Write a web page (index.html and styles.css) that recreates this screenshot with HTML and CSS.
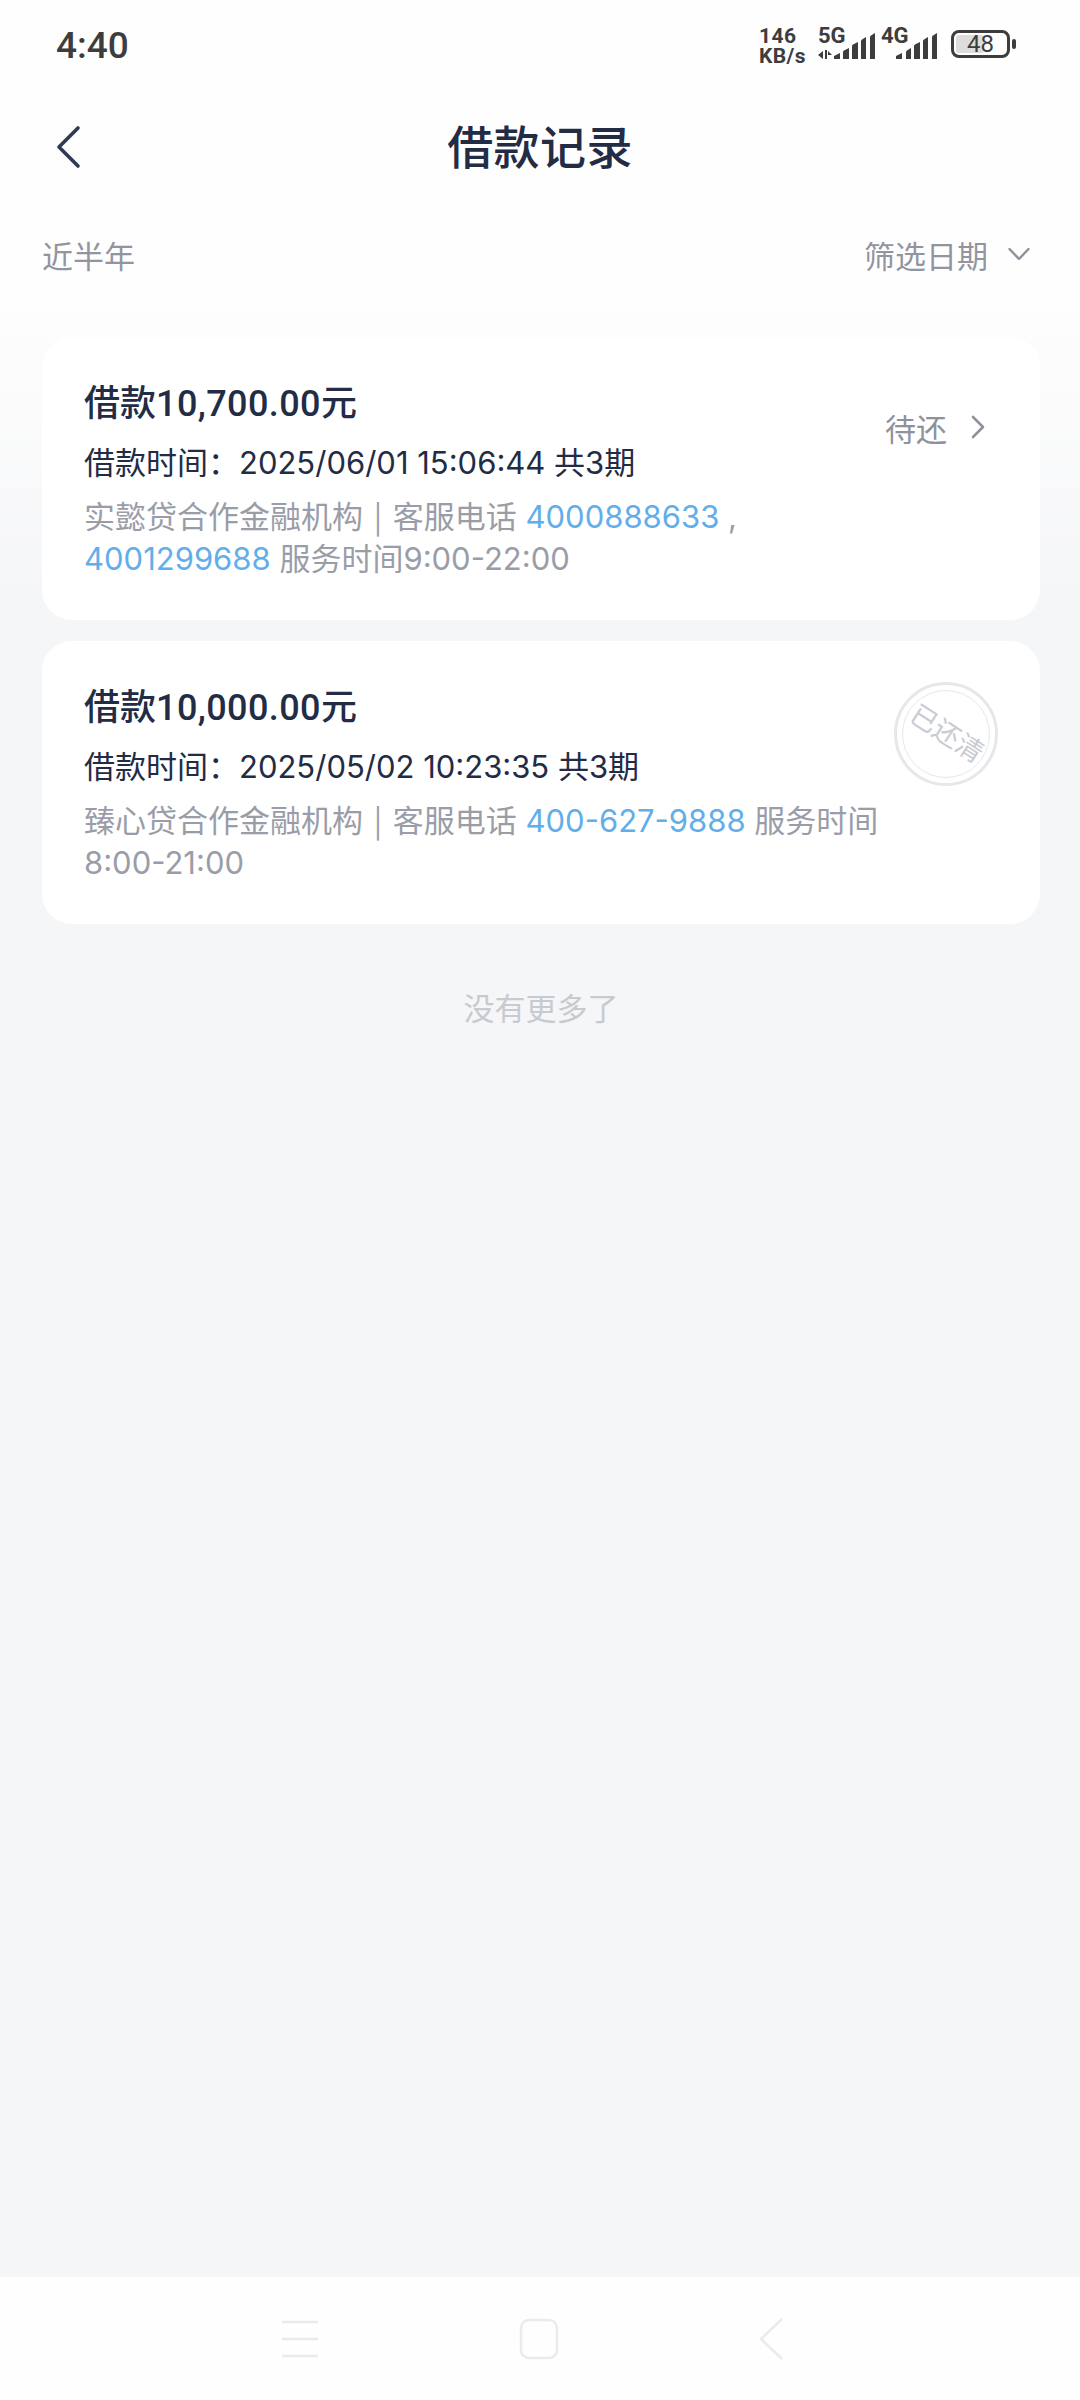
FILE: index.html
```html
<!DOCTYPE html>
<html lang="zh-CN">
<head>
<meta charset="utf-8">
<title>借款记录</title>
<link rel="stylesheet" href="styles.css">
</head>
<body>
<div class="screen">
  <header class="top">
    <div class="status">
      <span class="clock">4:40</span>
      <div class="indicators">
        <div class="speed"><span>146</span><span>KB/s</span></div>
        <div class="net net-five">
          <span class="net-label">5G</span>
          <svg class="net-icon" width="58" height="30" viewBox="0 0 58 30">
            <path d="M6 21v8l-5-4zM8 20h2v9H8zM11 21l4 4-4 0z" fill="#3d3d3d"/>
            <g fill="#3d3d3d"><path d="M17 26l6-3v6h-6z"/><path d="M26 22q0-1 1-1.500l5-2.500v11h-6z"/><path d="M35 16q0-1 1-1.500l5-2.500v17h-6z"/><path d="M44 11q0-1 1-1.500l4-2.500v22h-5z"/><path d="M53 7q0-1 1-1.500l4-2.500v26h-5z"/></g>
          </svg>
        </div>
        <div class="net net-four">
          <span class="net-label">4G</span>
          <svg class="net-icon" width="58" height="30" viewBox="0 0 58 30">
            <g fill="#3d3d3d"><path d="M16 26l6-3v6h-6z"/><path d="M26 22q0-1 1-1.500l4-2.500v11h-5z"/><path d="M34 16q0-1 1-1.500l5-2.500v17h-6z"/><path d="M43 11q0-1 1-1.500l4-2.500v22h-5z"/><path d="M52 7q0-1 1-1.500l4-2.500v26h-5z"/></g>
          </svg>
        </div>
        <div class="battery">
          <div class="battery-body"><i class="battery-fill"></i><span class="battery-num">48</span></div>
          <i class="battery-nib"></i>
        </div>
      </div>
    </div>
    <div class="titlebar">
      <svg class="back" width="26" height="44" viewBox="0 0 26 44"><path d="M23 3 4 22l19 19" fill="none" stroke="#2f3a55" stroke-width="3.600" stroke-linecap="round" stroke-linejoin="round"/></svg>
      <h1 class="title">借款记录</h1>
    </div>
    <div class="filter">
      <span>近半年</span>
      <div class="filter-date">
        <span>筛选日期</span>
        <svg width="22" height="14" viewBox="0 0 22 14"><path d="M1.500 2 11 12l9.500-10" fill="none" stroke="#8f929c" stroke-width="2.400" stroke-linecap="round" stroke-linejoin="round"/></svg>
      </div>
    </div>
  </header>

  <main class="content">
    <article class="card">
      <div class="card-body">
        <h2 class="amount">借款<span class="num">10,700.00</span>元</h2>
        <p class="time">借款时间：<span class="num">2025/06/01 15:06:44</span> 共<span class="num">3</span>期</p>
        <p class="desc">实懿贷合作金融机构 <span class="sep">|</span> 客服电话 <a class="tel">4000888633</a> , <a class="tel">4001299688</a> 服务时间<span class="num">9:00-22:00</span></p>
      </div>
      <div class="state">
        <span class="state-label">待还</span>
        <svg width="14" height="24" viewBox="0 0 14 24"><path d="M2 2l10 10L2 22" fill="none" stroke="#8f929c" stroke-width="2.600" stroke-linecap="round" stroke-linejoin="round"/></svg>
      </div>
    </article>

    <article class="card">
      <div class="card-body">
        <h2 class="amount">借款<span class="num">10,000.00</span>元</h2>
        <p class="time">借款时间：<span class="num">2025/05/02 10:23:35</span> 共<span class="num">3</span>期</p>
        <p class="desc">臻心贷合作金融机构 <span class="sep">|</span> 客服电话 <a class="tel">400-627-9888</a> 服务时间 <span class="num">8:00-21:00</span></p>
      </div>
      <div class="stamp"><span class="stamp-text">已还清</span></div>
    </article>

    <p class="end">没有更多了</p>
  </main>

  <nav class="navbar">
    <svg width="38" height="38" viewBox="0 0 38 38"><path d="M1 2h36M1 19h36M1 36h36" stroke="#ebebed" stroke-width="2.500" fill="none"/></svg>
    <svg width="40" height="42" viewBox="0 0 40 42"><rect x="2" y="2" width="36" height="38" rx="8" fill="none" stroke="#ebebed" stroke-width="2.500"/></svg>
    <svg width="26" height="44" viewBox="0 0 26 44"><path d="M24 2 3 22l21 20" fill="none" stroke="#ebebed" stroke-width="2.500"/></svg>
  </nav>
</div>
</body>
</html>
```
FILE: styles.css
```css
* { box-sizing: border-box; }
html, body { margin: 0; padding: 0; }
body {
  font-family: "Inter", "Noto Sans CJK SC", sans-serif;
  background: #f5f6f8;
  color: #232c45;
}
.screen {
  width: 1080px;
  height: 2400px;
  display: flex;
  flex-direction: column;
}
.top { background: #fefefe; height: 310px; flex: none; }
.status {
  height: 90px;
  display: flex;
  justify-content: space-between;
  padding: 26px 64px 0 56px;
  color: #3d3d3d;
}
.clock { font-family: "Roboto", sans-serif; font-size: 37px; font-weight: 500; line-height: 40px; }
.indicators { display: flex; align-items: flex-start; }
.speed {
  display: flex;
  flex-direction: column;
  width: 58px;
  font-family: "Roboto", sans-serif;
  font-weight: 700;
  font-size: 21px;
  line-height: 20px;
  letter-spacing: 0.4px;
}
.net { position: relative; width: 58px; height: 34px; }
.net-five { margin-right: 5px; }
.net-four { margin-right: 13px; }
.net-label {
  position: absolute;
  left: 1px;
  top: 0;
  font-family: "Roboto", sans-serif;
  font-weight: 700;
  font-size: 22px;
  line-height: 20px;
}
.net-icon { position: absolute; left: 0; top: 4px; }
.battery { display: flex; align-items: center; height: 30px; margin-top: 3px; }
.battery-body {
  position: relative;
  width: 59px;
  height: 28px;
  border: 3px solid #3d3d3d;
  border-radius: 8px;
  display: flex;
  align-items: center;
  justify-content: center;
}
.battery-fill {
  position: absolute;
  left: 2px;
  top: 2px;
  bottom: 2px;
  width: 28px;
  background: #dddddd;
  border-radius: 3px;
}
.battery-num { position: relative; font-family: "Roboto", sans-serif; font-size: 24px; line-height: 22px; }
.battery-nib { width: 4px; height: 10px; margin-left: 2px; background: #3d3d3d; border-radius: 2px; }

.titlebar {
  position: relative;
  height: 114px;
  display: flex;
  align-items: center;
  justify-content: center;
}
.back { position: absolute; left: 55px; top: 35px; }
.title { margin: 0; font-size: 46px; font-weight: 500; line-height: 60px; letter-spacing: 0.4px; color: #232c45; }
.filter {
  height: 100px;
  padding: 0 50px 0 42px;
  display: flex;
  align-items: center;
  justify-content: space-between;
  font-size: 31px;
  color: #92959f;
}
.filter-date { display: flex; align-items: center; gap: 20px; }

.content {
  flex: 1;
  padding: 27px 40px 0 42px;
  display: flex;
  flex-direction: column;
  gap: 21px;
  background: linear-gradient(#fdfdfd, #f5f6f8 300px);
}
.card {
  position: relative;
  height: 283px;
  background: #fff;
  border-radius: 30px;
  padding: 41px 0 0 42px;
}
.card-body { width: 840px; }
.amount { margin: 0; font-size: 36px; font-weight: 500; line-height: 50px; color: #232c45; }
.amount .num { font-family: "Roboto", sans-serif; letter-spacing: 0.4px; }
.time { margin: 13px 0 0; font-size: 31px; line-height: 42px; color: #232c45; }
.desc { margin: 10px 0 0; font-size: 31px; line-height: 42px; color: #9a9da8; }
.num { white-space: nowrap; }
.sep { font-family: "Noto Sans CJK SC", sans-serif; margin: 0 2px; }
.tel { color: #62aeea; white-space: nowrap; }
.state {
  position: absolute;
  right: 55px;
  top: 69px;
  display: flex;
  align-items: center;
  height: 42px;
  gap: 24px;
  font-size: 31px;
  color: #8f929c;
}
.state-label { white-space: nowrap; }
.stamp {
  position: absolute;
  left: 852px;
  top: 41px;
  width: 104px;
  height: 104px;
  border: 3px solid #e6e7ea;
  border-radius: 50%;
  display: flex;
  align-items: center;
  justify-content: center;
}
.stamp::before {
  content: "";
  position: absolute;
  inset: 5px;
  border: 1.500px solid #e6e7ea;
  border-radius: 50%;
}
.stamp-text {
  position: relative;
  font-size: 27px;
  line-height: 30px;
  color: #c9cbd2;
  background: #fff;
  white-space: nowrap;
  transform: rotate(33deg);
}
.end { margin: 42px 0 0; text-align: center; font-size: 31px; line-height: 44px; color: #c8cacf; }
.navbar {
  height: 123px;
  flex: none;
  background: #fefefe;
  display: flex;
  align-items: center;
  padding: 0 296px 0 281px;
  justify-content: space-between;
}
```
